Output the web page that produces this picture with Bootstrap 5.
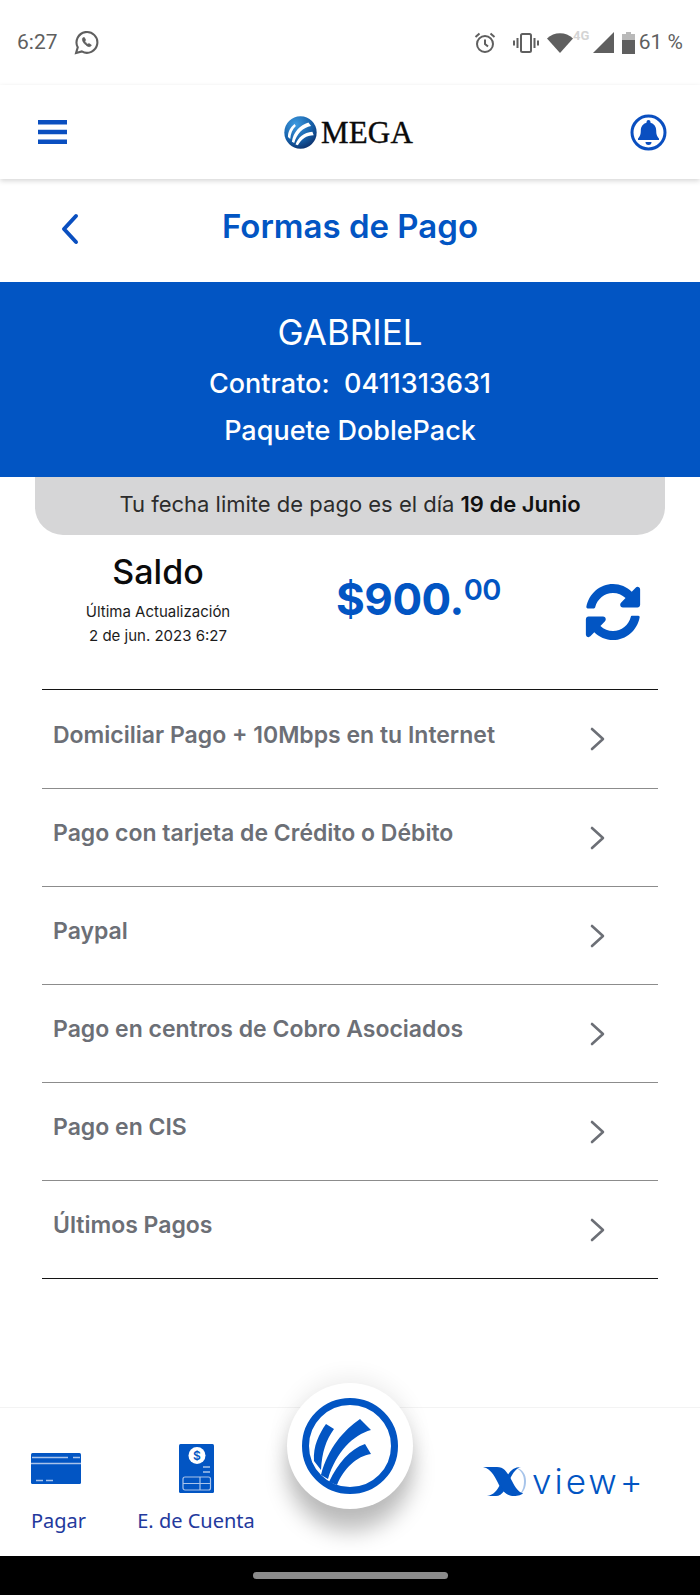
<!doctype html>
<html lang="es">
<head>
    <meta charset="utf-8">
    <meta name="viewport" content="width=device-width, initial-scale=1">
    <title>Formas de Pago</title>
    <link href="https://cdn.jsdelivr.net/npm/bootstrap@5.3.0/dist/css/bootstrap.min.css" rel="stylesheet">
    <style>
        body {
            font-family: Inter, "Open Sans", sans-serif;
            background: #fff;
        }

        .page {
            width: 700px;
            height: 1595px;
            overflow: hidden;
        }

        .status-bar {
            height: 85px;
            padding: 0 17px;
            font-family: Roboto, sans-serif;
            font-size: 21px;
            color: #5f5f5f;
        }

        .top-bar {
            height: 94px;
            padding: 0 33px 0 38px;
            box-shadow: 0 2px 5px rgba(0, 0, 0, .16);
            position: relative;
        }

        .mega-logo {
            font-family: "Liberation Serif", serif;
            font-size: 31px;
            line-height: 1;
            color: #0a0a0a;
            letter-spacing: .2px;
            -webkit-text-stroke: .4px #0a0a0a;
        }

        .title-row {
            height: 103px;
            position: relative;
        }

        .title-row h1 {
            font-size: 33px;
            font-weight: 600;
            color: #0255c3;
            margin: 0;
            padding-bottom: 8px;
        }

        .back-arrow {
            position: absolute;
            left: 60px;
            top: 34px;
        }

        .client-band {
            height: 195px;
            background: #0255c3;
            color: #fff;
        }

        .client-name {
            font-size: 35px;
            font-weight: 400;
            line-height: 1;
            margin-bottom: 20px;
        }

        .client-line {
            font-size: 27px;
            font-weight: 500;
            line-height: 1;
            margin-bottom: 20px;
        }

        .client-line.last {
            margin-bottom: 0;
        }

        .due-pill {
            height: 58px;
            margin: 0 35px;
            background: #d6d6d7;
            border-radius: 0 0 28px 28px;
            font-size: 22px;
            color: #2c2c2c;
            padding-bottom: 4px;
        }

        .due-pill strong {
            font-weight: 600;
            color: #111;
        }

        .balance-row {
            height: 154px;
            position: relative;
        }

        .balance-info {
            width: 316px;
            padding-bottom: 22px;
        }

        .balance-title {
            font-size: 34px;
            font-weight: 500;
            line-height: 1;
            color: #0b0b0b;
            margin-bottom: 11px;
        }

        .balance-note {
            font-size: 15px;
            line-height: 24px;
            color: #1c1c1c;
        }

        .balance-amount {
            font-size: 44px;
            font-weight: 700;
            line-height: 1;
            color: #0255c3;
            letter-spacing: -.5px;
            margin-left: 20px;
            margin-bottom: 26px;
        }

        .balance-amount sup {
            font-size: 29px;
            font-weight: 600;
            top: -15px;
            vertical-align: baseline;
            position: relative;
        }

        .refresh-icon {
            position: absolute;
            left: 585px;
            top: 48px;
        }

        .pay-list {
            margin: 0 42px;
            height: 590px;
            border-top: 1px solid #141414;
            border-bottom: 1px solid #141414;
        }

        .pay-item {
            height: 98px;
            padding: 0 53px 0 11px;
            border-top: 1px solid #8c8c8c;
            font-size: 23px;
            font-weight: 600;
            color: #6c6f76;
            text-decoration: none;
        }

        .pay-item:first-child {
            border-top: 0;
        }

        .pay-item span {
            padding-bottom: 8px;
        }

        .spacer-area {
            height: 129px;
            border-bottom: 1px solid #f3f3f3;
        }

        .bottom-bar {
            height: 148px;
            position: relative;
            font-family: "Noto Sans", "Open Sans", sans-serif;
            font-size: 20px;
            color: #23399d;
        }

        .bottom-tab {
            position: absolute;
            top: 36px;
            text-align: center;
            line-height: 1;
        }

        .tab-pay {
            left: 31px;
            width: 50px;
        }

        .tab-account {
            left: 131px;
            width: 130px;
        }

        .tab-pay svg {
            margin-top: 9px;
            margin-bottom: 27px;
        }

        .tab-account svg {
            margin-bottom: 18px;
        }

        .home-button {
            position: absolute;
            left: 287px;
            top: -25px;
            width: 126px;
            height: 126px;
            border-radius: 50%;
            background: #fff;
            box-shadow: 0 22px 22px rgba(0, 0, 0, .26), 0 -6px 22px rgba(0, 0, 0, .07);
        }

        .xview {
            position: absolute;
            left: 483px;
            top: 58px;
            color: #0255c3;
            font-family: Inter, sans-serif;
            font-size: 35px;
            font-weight: 300;
            line-height: 30px;
        }

        .xview span {
            letter-spacing: 3px;
            margin-left: 5px;
        }

        .nav-strip {
            height: 39px;
            background: #000;
            padding-top: 16px;
        }

        .home-pill {
            width: 195px;
            height: 7px;
            background: #8b8b8b;
            border-radius: 4px;
        }
    </style>
</head>
<body>
<div class="page d-flex flex-column">

    <div class="status-bar d-flex align-items-center justify-content-between">
        <div class="d-flex align-items-center gap-3">
            <span>6:27</span>
            <svg width="25" height="25" viewBox="0 0 24 24" fill="none" stroke="#5f5f5f" stroke-width="2">
                <path d="M2 22l1.6-5.4A10 10 0 1 1 7.5 20.6z"/>
                <path d="M8.6 7.4c-1 1-.8 3 1.3 5.6 2.2 2.6 4.5 3.6 6 2.6l.8-1.2-2.4-1.5-1 .8c-1-.4-2.4-1.9-2.9-3l.8-1-1.2-2.4z" fill="#5f5f5f" stroke-width=".6"/>
            </svg>
        </div>
        <div class="d-flex align-items-center">
            <svg class="me-3" width="24" height="24" viewBox="0 0 24 24" fill="none" stroke="#5f5f5f" stroke-width="2">
                <circle cx="12" cy="13" r="8"/>
                <path d="M12 8.5V13l3 2.5M2.5 6l4-3.5M21.5 6l-4-3.5"/>
            </svg>
            <svg class="me-2" width="26" height="22" viewBox="0 0 26 22" fill="none" stroke="#5f5f5f" stroke-width="2">
                <rect x="8" y="2" width="10" height="18" rx="1.5"/>
                <path d="M4.500 6v10M1 8.500v5M21.500 6v10M25 8.500v5"/>
            </svg>
            <svg width="26" height="20" viewBox="0 0 26 20" fill="#5f5f5f">
                <path d="M0 5.500C7-1.500 19-1.500 26 5.500L13 20z"/>
            </svg>
            <span class="status-net">
                <svg width="20" height="14" viewBox="0 0 20 14" class="mb-3"><text x="0" y="12" font-family="Roboto, sans-serif" font-size="13" font-weight="700" fill="#d4d4d4">4G</text></svg>
            </span>
            <svg width="21" height="21" viewBox="0 0 21 21" fill="#5f5f5f">
                <path d="M21 0v21H0z"/>
            </svg>
            <svg class="ms-2" width="13" height="22" viewBox="0 0 13 22">
                <path d="M4 0h5v2h4v20H0V2h4z" fill="#b9b9b9"/>
                <path d="M0 8h13v14H0z" fill="#5f5f5f"/>
            </svg>
            <span class="ms-1">61 %</span>
        </div>
    </div>

    <div class="top-bar d-flex align-items-center justify-content-between">
        <svg width="29" height="24" viewBox="0 0 29 24" fill="#0a4fc0">
            <path d="M0 0h29v4.500H0zM0 9.750h29v4.500H0zM0 19.500h29V24H0z"/>
        </svg>
        <div class="d-flex align-items-center gap-1">
            <svg width="33" height="33" viewBox="-50 -50 100 100">
                <defs>
                    <radialGradient id="megaGlobe" cx="35%" cy="25%" r="85%">
                        <stop offset="0" stop-color="#3f9be0"/>
                        <stop offset=".6" stop-color="#155fa8"/>
                        <stop offset="1" stop-color="#0b2a63"/>
                    </radialGradient>
                </defs>
                <circle r="49" fill="url(#megaGlobe)"/>
                <path d="M-38 14C-38-4-30-16-18-26L-14-20C-24-10-30 2-31 20z" fill="#fff"/>
                <path d="M-26 28C-22 0-2-22 24-30L32-20C8-16-12 4-19 32z" fill="#fff"/>
                <path d="M-15 36C-8 16 10 0 36-2L40 8C18 8 2 20-8 39z" fill="#fff"/>
            </svg>
            <span class="mega-logo">MEGA</span>
        </div>
        <svg width="37" height="37" viewBox="0 0 37 37">
            <circle cx="18.500" cy="18.500" r="16.500" fill="none" stroke="#0a4fc0" stroke-width="3"/>
            <path d="M18.500 6a2 2 0 0 1 2 2v.7c3.600 1 5.700 4 5.700 7.800 0 5 1.400 6.400 2.800 8v1.500H8v-1.500c1.400-1.600 2.800-3 2.800-8 0-3.800 2.100-6.800 5.700-7.800V8a2 2 0 0 1 2-2z" fill="#0a4fc0"/>
            <path d="M15.500 28h6a3 3 0 0 1-6 0z" fill="#0a4fc0"/>
        </svg>
    </div>

    <div class="title-row d-flex align-items-center justify-content-center">
        <svg class="back-arrow" width="20" height="32" viewBox="0 0 20 32" fill="none" stroke="#0a4fc0" stroke-width="4" stroke-linecap="round" stroke-linejoin="round">
            <path d="M16 3L4 16l12 13"/>
        </svg>
        <h1>Formas de Pago</h1>
    </div>

    <div class="client-band d-flex flex-column align-items-center justify-content-center text-center">
        <div class="client-name">GABRIEL</div>
        <div class="client-line">Contrato:&nbsp; 0411313631</div>
        <div class="client-line last">Paquete DoblePack</div>
    </div>

    <div class="due-pill d-flex align-items-center justify-content-center">
        <span>Tu fecha limite de pago es el día <strong>19 de Junio</strong></span>
    </div>

    <div class="balance-row d-flex align-items-center">
        <div class="balance-info text-center">
            <div class="balance-title">Saldo</div>
            <div class="balance-note">Última Actualización<br>2 de jun. 2023 6:27</div>
        </div>
        <div class="balance-amount">$900.<sup>00</sup></div>
        <svg class="refresh-icon" width="56" height="58" viewBox="0 0 512 512" preserveAspectRatio="none" fill="#0255c3">
            <path d="M370.72 133.28C339.458 104.008 298.888 87.962 255.848 88c-77.458.068-144.328 53.178-162.791 126.85-1.344 5.363-6.122 9.15-11.651 9.15H24.103c-7.498 0-13.194-6.807-11.807-14.176C33.933 94.924 134.813 8 256 8c66.448 0 126.791 26.136 171.315 68.685L463.03 40.97C478.149 25.851 504 36.559 504 57.941V192c0 13.255-10.745 24-24 24H345.941c-21.382 0-32.09-25.851-16.971-40.971l41.75-41.749zM32 296h134.059c21.382 0 32.09 25.851 16.971 40.971l-41.75 41.75c31.262 29.273 71.835 45.319 114.876 45.28 77.418-.07 144.315-53.144 162.787-126.849 1.344-5.363 6.122-9.15 11.651-9.15h57.304c7.498 0 13.194 6.807 11.807 14.176C478.067 417.076 377.187 504 256 504c-66.448 0-126.791-26.136-171.315-68.685L48.97 471.03C33.851 486.149 8 475.441 8 454.059V320c0-13.255 10.745-24 24-24z"/>
        </svg>
    </div>

    <div class="pay-list d-flex flex-column">
        <a class="pay-item d-flex align-items-center justify-content-between" href="#"><span>Domiciliar Pago + 10Mbps en tu Internet</span><svg width="16" height="24" viewBox="0 0 16 24" fill="none" stroke="#6c6f76" stroke-width="2.600" stroke-linecap="round" stroke-linejoin="round"><path d="M3 2l11 10L3 22"/></svg></a>
        <a class="pay-item d-flex align-items-center justify-content-between" href="#"><span>Pago con tarjeta de Crédito o Débito</span><svg width="16" height="24" viewBox="0 0 16 24" fill="none" stroke="#6c6f76" stroke-width="2.600" stroke-linecap="round" stroke-linejoin="round"><path d="M3 2l11 10L3 22"/></svg></a>
        <a class="pay-item d-flex align-items-center justify-content-between" href="#"><span>Paypal</span><svg width="16" height="24" viewBox="0 0 16 24" fill="none" stroke="#6c6f76" stroke-width="2.600" stroke-linecap="round" stroke-linejoin="round"><path d="M3 2l11 10L3 22"/></svg></a>
        <a class="pay-item d-flex align-items-center justify-content-between" href="#"><span>Pago en centros de Cobro Asociados</span><svg width="16" height="24" viewBox="0 0 16 24" fill="none" stroke="#6c6f76" stroke-width="2.600" stroke-linecap="round" stroke-linejoin="round"><path d="M3 2l11 10L3 22"/></svg></a>
        <a class="pay-item d-flex align-items-center justify-content-between" href="#"><span>Pago en CIS</span><svg width="16" height="24" viewBox="0 0 16 24" fill="none" stroke="#6c6f76" stroke-width="2.600" stroke-linecap="round" stroke-linejoin="round"><path d="M3 2l11 10L3 22"/></svg></a>
        <a class="pay-item d-flex align-items-center justify-content-between" href="#"><span>Últimos Pagos</span><svg width="16" height="24" viewBox="0 0 16 24" fill="none" stroke="#6c6f76" stroke-width="2.600" stroke-linecap="round" stroke-linejoin="round"><path d="M3 2l11 10L3 22"/></svg></a>
    </div>

    <div class="spacer-area"></div>

    <div class="bottom-bar">
        <div class="bottom-tab tab-pay">
            <svg class="d-block mx-auto" width="50" height="31" viewBox="0 0 50 31">
                <rect width="50" height="31" rx="1.500" fill="#0255c3"/>
                <path d="M1 4.500h36M42 4.500h7M0 10.500h50" stroke="#a9c3ea" stroke-width="1.500"/>
                <path d="M5 27.500h7M15 27.500h7" stroke="#a9c3ea" stroke-width="1.500"/>
            </svg>
            Pagar
        </div>
        <div class="bottom-tab tab-account">
            <svg class="d-block mx-auto" width="35" height="49" viewBox="0 0 35 49">
                <rect width="35" height="49" rx="1.500" fill="#0255c3"/>
                <circle cx="18" cy="11.500" r="8.500" fill="#fff"/>
                <text x="18" y="16" text-anchor="middle" font-family="Inter, sans-serif" font-size="12" font-weight="600" fill="#0255c3">$</text>
                <path d="M24 23h7M24 28h7" stroke="#a9c3ea" stroke-width="1.300"/>
                <rect x="4" y="33" width="27.500" height="13" rx="2" fill="none" stroke="#a9c3ea" stroke-width="1.200"/>
                <path d="M4 39.500h27.500M21 33v13M7 39.500h3" stroke="#a9c3ea" stroke-width="1.200"/>
            </svg>
            E. de Cuenta
        </div>

        <div class="home-button d-flex align-items-center justify-content-center">
            <svg width="100" height="100" viewBox="-50 -50 100 100" fill="#0255c3">
                <circle r="44.500" fill="none" stroke="#0255c3" stroke-width="7"/>
                <path d="M-36 15C-37 0-31-12-24-22L-16-17C-24-6-28 6-29 24z"/>
                <path d="M-29 29C-22 2-6-16 10-27L21-16C3-11-14 6-22 33z"/>
                <path d="M-21 36C-12 17 0 3 15-2L21 8C7 10-6 22-13 39z"/>
            </svg>
        </div>

        <div class="xview d-flex align-items-center">
            <svg width="44" height="30" viewBox="0 0 44 30">
                <path d="M0 1h14c8 0 11 7 15 14 3 6 7 12 11 12-1 2-5 3-9 3-8 0-12-6-15-11C13 13 9 3 0 1z" fill="#0255c3"/>
                <path d="M4 30c7-1 10-6 13-11l4 6c-2 3-5 5-8 5zM24 10c3-5 7-9 14-9-5 1-8 6-11 12z" fill="#0255c3"/>
                <path d="M33 2c7 1 10 7 10 13s-2 11-6 13c3-4 4-8 4-13s-2-10-8-13z" fill="#0255c3" opacity=".35"/>
            </svg>
            <span>view+</span>
        </div>
    </div>

    <div class="nav-strip">
        <div class="home-pill mx-auto"></div>
    </div>
</div>
<script src="https://cdn.jsdelivr.net/npm/bootstrap@5.3.0/dist/js/bootstrap.bundle.min.js"></script>
</body>
</html>
